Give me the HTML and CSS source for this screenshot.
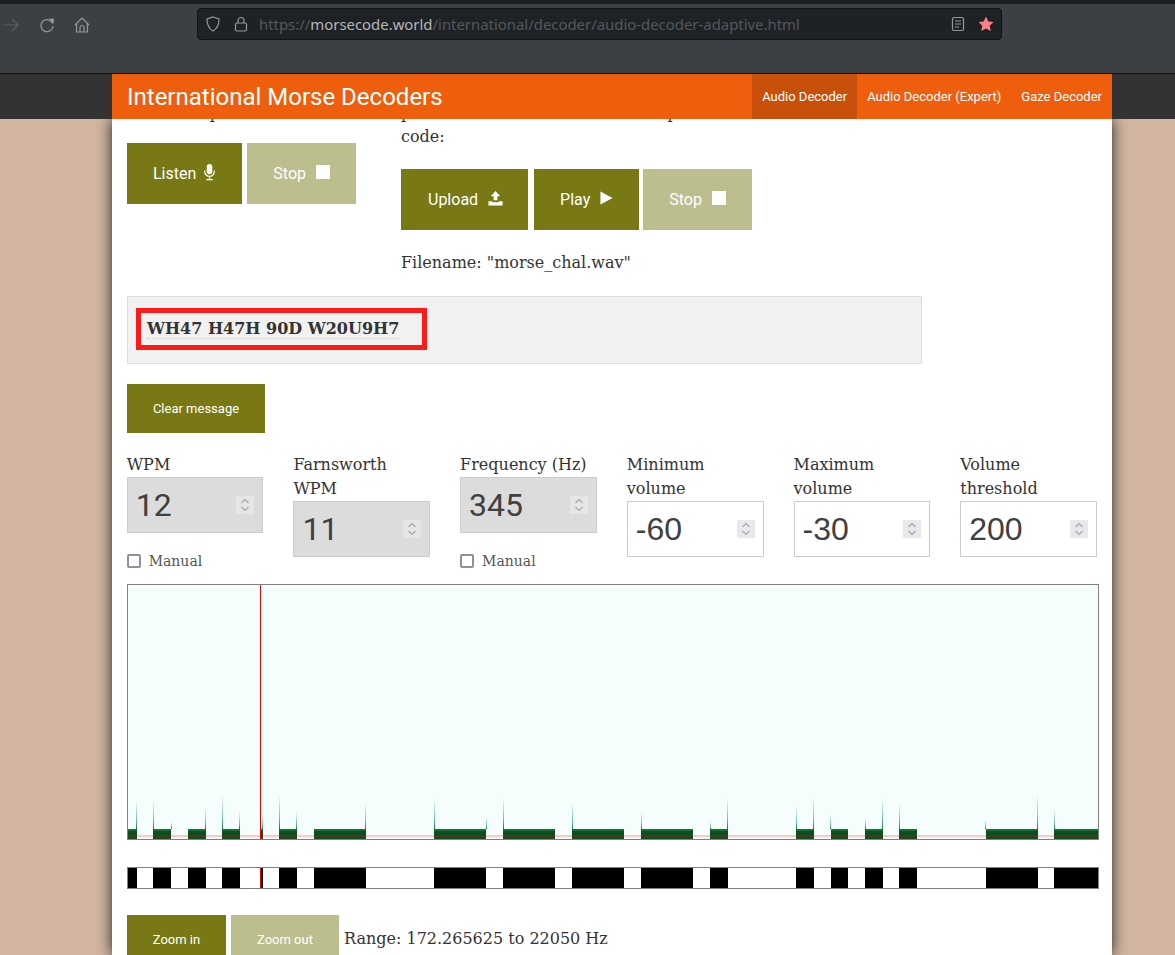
FILE: index.html
```html
<!DOCTYPE html>
<html lang="en">
<head>
    <meta charset="UTF-8">
    <meta name="viewport" content="width=device-width, initial-scale=1.0">
    <title>International Morse Decoders</title>
    <link rel="stylesheet" href="styles.css">
</head>
<body>

<div class="browser">
    <div class="browser-top"></div>
    <div class="toolbar">
        <svg class="tool-icon forward" viewBox="0 0 16 16"><path d="M1 8h14M9 2l6 6-6 6"/></svg>
        <svg class="tool-icon reload" viewBox="0 0 16 16"><path d="M13.6 6.5A6 6 0 1 0 14 9"/><path class="solid" d="M10 1.5l5 0.2-0.4 5z"/></svg>
        <svg class="tool-icon home" viewBox="0 0 16 16"><path d="M1 8l7-7 7 7M2.5 7v8h11V7M6 15v-4.500a2 2 0 0 1 4 0V15"/></svg>
        <div class="urlbar">
            <svg class="url-icon" viewBox="0 0 16 16"><path d="M8 1l6 2c0 6-1.500 9.500-6 12C3.500 12.500 2 9 2 3z"/></svg>
            <svg class="url-icon lock" viewBox="0 0 16 16"><rect x="2.500" y="7" width="11" height="8" rx="1.500"/><path d="M5 7V4.500a3 3 0 0 1 6 0V7"/></svg>
            <span class="url">https://<b>morsecode.world</b>/international/decoder/audio-decoder-adaptive.html</span>
            <svg class="url-icon reader" viewBox="0 0 16 16"><rect x="2.500" y="1.500" width="11" height="13" rx="1.500"/><path d="M5 5h6M5 8h6M5 11h4"/></svg>
            <svg class="star" viewBox="0 0 16 16"><path d="M8 0.500l2.300 4.900 5.200 0.700-3.800 3.700 1 5.300L8 12.500l-4.700 2.600 1-5.300L0.500 6.100l5.200-0.700z"/></svg>
        </div>
    </div>
</div>

<header class="site-band">
    <div class="site-nav">
        <span class="site-title">International Morse Decoders</span>
        <nav>
            <a href="#" class="active">Audio Decoder</a>
            <a href="#">Audio Decoder (Expert)</a>
            <a href="#">Gaze Decoder</a>
        </nav>
    </div>
</header>

<main class="container">
    <div class="sources">
        <div class="source-mic">
            <p class="intro">Use microphone:</p>
            <div class="btn-row">
                <button class="btn">Listen
                    <svg class="btn-icon mic" viewBox="0 0 14 18"><path d="M4 3.500a3 3 0 0 1 6 0v5a3 3 0 0 1-6 0z"/><path class="line" d="M1.800 7.500v1a5.200 5.200 0 0 0 10.400 0v-1M7 14v3M3.500 17.300h7"/></svg>
                </button>
                <button class="btn btn-off">Stop <span class="stop-square"></span></button>
            </div>
        </div>
        <div class="source-file">
            <p class="intro">pick a sound file and afterwards press Start to decode its Morse<br>code:</p>
            <div class="btn-row">
                <button class="btn upload-btn">Upload
                    <svg class="btn-icon upload" viewBox="0 0 16 16"><path d="M8 0.500l5 5.500H10v4.500H6V6H3z"/><path d="M0.500 11.500h4v1h7v-1h4V16H0.500z"/></svg>
                </button>
                <button class="btn">Play <svg class="btn-icon play" viewBox="0 0 14 14"><path d="M0.500 0l13 7-13 7z"/></svg></button>
                <button class="btn btn-off">Stop <span class="stop-square"></span></button>
            </div>
            <p class="filename">Filename: "morse_chal.wav"</p>
        </div>
    </div>

    <div class="message-box">
        <div class="highlight"><span class="message">WH47 H47H 90D W20U9H7</span></div>
    </div>

    <button class="btn btn-small clear-btn">Clear message</button>

    <div class="params">
        <div class="param">
            <label>WPM</label>
            <div class="num-input disabled"><span>12</span><i class="spin"><svg viewBox="0 0 10 14"><path d="M1.500 5L5 1.500 8.500 5M1.500 9L5 12.500 8.500 9"/></svg></i></div>
            <div class="manual"><span class="check"></span>Manual</div>
        </div>
        <div class="param">
            <label>Farnsworth WPM</label>
            <div class="num-input disabled"><span>11</span><i class="spin"><svg viewBox="0 0 10 14"><path d="M1.500 5L5 1.500 8.500 5M1.500 9L5 12.500 8.500 9"/></svg></i></div>
        </div>
        <div class="param">
            <label>Frequency (Hz)</label>
            <div class="num-input disabled"><span>345</span><i class="spin"><svg viewBox="0 0 10 14"><path d="M1.500 5L5 1.500 8.500 5M1.500 9L5 12.500 8.500 9"/></svg></i></div>
            <div class="manual"><span class="check"></span>Manual</div>
        </div>
        <div class="param">
            <label>Minimum volume</label>
            <div class="num-input"><span>-60</span><i class="spin"><svg viewBox="0 0 10 14"><path d="M1.500 5L5 1.500 8.500 5M1.500 9L5 12.500 8.500 9"/></svg></i></div>
        </div>
        <div class="param">
            <label>Maximum volume</label>
            <div class="num-input"><span>-30</span><i class="spin"><svg viewBox="0 0 10 14"><path d="M1.500 5L5 1.500 8.500 5M1.500 9L5 12.500 8.500 9"/></svg></i></div>
        </div>
        <div class="param">
            <label>Volume threshold</label>
            <div class="num-input"><span>200</span><i class="spin"><svg viewBox="0 0 10 14"><path d="M1.500 5L5 1.500 8.500 5M1.500 9L5 12.500 8.500 9"/></svg></i></div>
        </div>
    </div>

    <canvas id="spectrogram" width="970" height="254"></canvas>
    <canvas id="timeline" width="970" height="20"></canvas>

    <div class="range-row">
        <button class="btn btn-small zoom-in">Zoom in</button>
        <button class="btn btn-small btn-off zoom-out">Zoom out</button>
        <span class="range">Range: 172.265625 to 22050 Hz</span>
    </div>
</main>

<script src="script.js"></script>
</body>
</html>
```

FILE: styles.css
```css
html, body {
    height: 100%;
    overflow: hidden;
}
body {
    margin: 0;
    padding: 0;
    background-color: #d2b6a1;
    color: #333;
    font-family: "DejaVu Serif", serif;
    font-size: 16px;
    line-height: 24px;
}

/* browser window */
.browser-top {
    height: 4px;
    background-color: #1a1e21;
}
.toolbar {
    display: flex;
    align-items: flex-start;
    height: 69px;
    background-color: #3c3f43;
    border-bottom: 1px solid #101214;
    position: relative;
    z-index: 3;
}
.tool-icon {
    width: 16px;
    height: 16px;
    margin-top: 13px;
    fill: none;
    stroke: #96989b;
    stroke-width: 1.200;
}
.tool-icon .solid {
    fill: #96989b;
    stroke: none;
}
.forward {
    margin-left: 3px;
    stroke: #5d6063;
}
.reload {
    margin-left: 20px;
}
.home {
    margin-left: 19px;
}
.urlbar {
    display: flex;
    align-items: center;
    width: 805px;
    height: 32px;
    box-sizing: border-box;
    margin: 4px 0 0 107px;
    padding: 0 7px 0 7px;
    background-color: #1e2225;
    border: 1px solid #101214;
    border-radius: 4px;
}
.url-icon {
    width: 16px;
    height: 16px;
    flex: none;
    fill: none;
    stroke: #96989b;
    stroke-width: 1.200;
}
.lock {
    margin-left: 12px;
}
.url {
    margin-left: 10px;
    flex: 1;
    color: #54585b;
    font-family: "Noto Sans", sans-serif;
    font-size: 14.9px;
    white-space: nowrap;
}
.url b {
    color: #b4b6b8;
    font-weight: normal;
}
.star {
    width: 16px;
    height: 16px;
    margin-left: 12px;
    fill: #ff7f84;
}

/* site header */
.site-band {
    background-color: #333;
    position: relative;
    z-index: 2;
}
.site-nav {
    display: flex;
    justify-content: space-between;
    width: 1000px;
    height: 45px;
    margin-left: 112px;
    background-color: #ee5e0c;
    color: #fff;
    font-family: Roboto, sans-serif;
}
.site-title {
    padding-left: 15px;
    font-size: 24px;
    line-height: 47px;
}
.site-nav nav {
    display: flex;
}
.site-nav a {
    padding: 0 10px;
    color: #fff;
    font-size: 13px;
    line-height: 45px;
    text-decoration: none;
}
.site-nav a.active {
    background-color: #c8500b;
}

/* page */
.container {
    width: 1000px;
    height: 836px;
    box-sizing: border-box;
    margin-left: 112px;
    padding: 0 15px;
    background-color: #fff;
    box-shadow: 0 0 14px rgba(0, 0, 0, 0.85);
    overflow: hidden;
}
.sources {
    display: flex;
    margin-top: -18px;
}
.source-mic {
    width: 274px;
}
.source-file {
    flex: 1;
}
.intro {
    margin: 0;
}
.source-mic .btn-row {
    margin-top: 18px;
}
.source-file .btn-row {
    margin-top: 20px;
    gap: 4px;
}
.btn-row {
    display: flex;
    gap: 5px;
}
.btn {
    display: inline-flex;
    align-items: center;
    justify-content: center;
    gap: 10px;
    height: 61px;
    padding: 0 26px;
    border: none;
    background-color: #787815;
    color: #fff;
    font-family: Roboto, sans-serif;
    font-size: 16px;
    cursor: pointer;
}
.btn-off {
    background-color: #bcbe8d;
}
.btn-icon {
    width: 14px;
    height: 18px;
    fill: #fff;
    margin-top: -3px;
}
.btn-icon .line {
    fill: none;
    stroke: #fff;
    stroke-width: 1.300;
}
.mic {
    width: 13px;
    margin-left: -3px;
}
.upload {
    width: 15px;
    height: 16px;
}
.upload-btn {
    margin-right: 2px;
    padding: 0 25px 0 27px;
}
.play {
    width: 13px;
    height: 14px;
}
.stop-square {
    width: 14px;
    height: 14px;
    background-color: #fff;
    margin-top: -3px;
}
.filename {
    margin: 21px 0 0 0;
}

.message-box {
    width: 795px;
    height: 68px;
    box-sizing: border-box;
    margin-top: 21px;
    padding: 11px 8px;
    background-color: #f1f1f1;
    border: 1px solid #ddd;
}
.highlight {
    display: inline-block;
    padding: 0 23px 0 6px;
    height: 32px;
    border: 5px solid #ff1a1a;
}
.message {
    display: inline-block;
    font-size: 16px;
    font-weight: bold;
    line-height: 19px;
    margin-top: 6px;
    border-bottom: 1px dotted #ccc;
    vertical-align: top;
}

.btn-small {
    height: 49px;
    font-size: 13px;
}
.clear-btn {
    margin-top: 20px;
    display: flex;
    width: 138px;
    padding: 0;
}

.params {
    display: grid;
    grid-template-columns: repeat(6, 1fr);
    gap: 30px;
    height: 131px;
    margin: 20px 0 0 -0.33px;
}
.param label {
    display: block;
}
.num-input {
    display: flex;
    align-items: center;
    justify-content: space-between;
    height: 56px;
    box-sizing: border-box;
    padding: 0 8px 0 8px;
    border: 1px solid #ccc;
    background-color: #fff;
    color: #404040;
    font-family: "Liberation Sans", sans-serif;
    font-size: 32px;
}
.num-input.disabled {
    background-color: #dcdcdc;
    font-family: Roboto, sans-serif;
}
.spin {
    display: flex;
    align-items: center;
    justify-content: center;
    width: 18px;
    height: 18px;
    background-color: #e9e9ed;
}
.disabled .spin {
    background-color: #e6e6e6;
}
.spin svg {
    width: 10px;
    height: 14px;
    fill: none;
    stroke: #a5a5aa;
    stroke-width: 1.100;
}
.manual {
    display: flex;
    align-items: center;
    gap: 8px;
    margin-top: 16px;
    color: #555;
    font-size: 14px;
}
.check {
    width: 10px;
    height: 10px;
    border: 2px solid #8f8f9d;
    border-radius: 2px;
}

canvas {
    display: block;
    border: 1px solid #808080;
}
#timeline {
    margin-top: 27px;
}
.range-row {
    display: flex;
    align-items: center;
    margin-top: 26px;
}
.zoom-in {
    width: 99px;
    padding: 0;
}
.zoom-out {
    width: 108px;
    padding: 0;
    margin-left: 5px;
}
.range {
    margin-left: 5px;
    margin-top: -2px;
}
```

FILE: script.js
```js
// page x positions of the tones
const tones = [[128, 137], [153, 171], [188, 206], [222, 240], [261, 263], [279, 297], [314, 366],
    [434, 486], [503, 555], [572, 624], [641, 693], [710, 728], [796, 814], [831, 848], [865, 883],
    [899, 917], [986, 1038], [1054, 1098]];

// [x, top y] of the thin spikes at tone edges
const spikes = [[136, 800], [153, 800], [171, 822], [205, 808], [222, 795], [239, 812], [262, 813],
    [279, 795], [296, 812], [365, 803], [434, 797], [486, 817], [503, 797], [572, 803], [641, 812],
    [710, 822], [727, 797], [796, 807], [813, 797], [830, 815], [865, 818], [882, 797], [899, 803],
    [985, 820], [1037, 795], [1054, 810]];

const offsetX = 128;
const offsetY = 585;
const cursorX = 260;

const spec = document.getElementById("spectrogram").getContext("2d");
spec.fillStyle = "#f5fdfd";
spec.fillRect(0, 0, 970, 254);

spikes.forEach(([x, top]) => {
    const grad = spec.createLinearGradient(0, top - offsetY, 0, 829 - offsetY);
    grad.addColorStop(0, "rgba(70, 180, 140, 0)");
    grad.addColorStop(0.7, "rgba(70, 180, 140, 0.8)");
    grad.addColorStop(1, "rgba(20, 120, 70, 1)");
    spec.fillStyle = grad;
    spec.fillRect(x - offsetX, top - offsetY, 1, 829 - top);
});

// threshold line
spec.fillStyle = "#ffc8c8";
spec.fillRect(0, 835 - offsetY, 970, 2);

tones.forEach(([start, end]) => {
    const x = start - offsetX;
    const w = end - start;
    spec.fillStyle = "#177033";
    spec.fillRect(x, 829 - offsetY, w, 2);
    spec.fillStyle = "#0c4f22";
    spec.fillRect(x, 831 - offsetY, w, 8);
    spec.fillStyle = "#4a3a14";
    spec.fillRect(x, 835 - offsetY, w, 2);
});

spec.fillStyle = "#e80000";
spec.fillRect(cursorX - offsetX, 0, 1, 254);

const time = document.getElementById("timeline").getContext("2d");
time.fillStyle = "#fff";
time.fillRect(0, 0, 970, 20);
time.fillStyle = "#000";
tones.forEach(([start, end]) => time.fillRect(start - offsetX, 0, end - start, 20));
time.fillStyle = "#e80000";
time.fillRect(cursorX - offsetX, 0, 1, 20);
```
